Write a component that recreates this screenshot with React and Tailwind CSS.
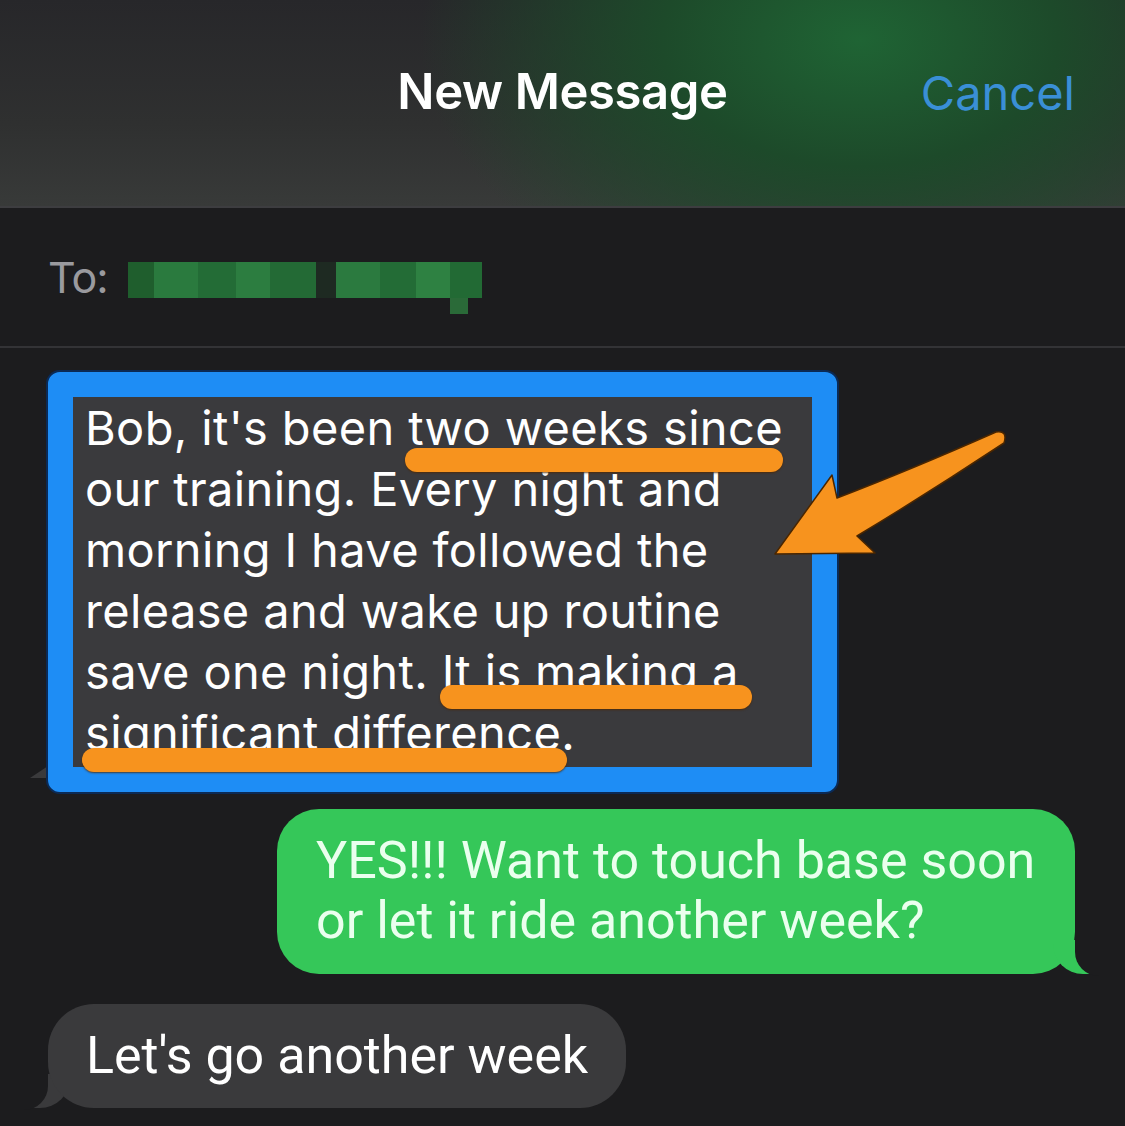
import React from "react";

const font = { fontFamily: "Inter, 'Noto Sans', sans-serif" };
const narrow = { fontFamily: "Roboto, 'Liberation Sans', sans-serif" };

const Underline = ({ className }) => (
  <div className={`absolute h-[24px] rounded-full bg-[#f7931e] shadow-[0_1px_2px_rgba(80,40,0,0.8)] ${className}`} />
);

const Arrow = () => (
  <svg className="absolute left-[760px] top-[420px]" width="260" height="150" viewBox="0 0 260 150">
    <path
      d="M15 134 L72 55 L77 78 Q150 50 236 12 Q248 10 244 23 Q170 72 97 116 L115 133 Z"
      fill="#f7931e"
      stroke="#4a2600"
      strokeWidth="1.5"
      strokeLinejoin="round"
    />
  </svg>
);

export default function App() {
  return (
    <div className="relative w-[1125px] h-[1126px] overflow-hidden bg-[#1c1c1e]" style={font}>
      {/* header */}
      <div className="relative h-[208px] border-b-2 border-[#3d3d40] bg-[radial-gradient(ellipse_440px_280px_at_860px_40px,#1f6434_0%,#1d4a2a_45%,rgba(40,44,42,0)_100%),linear-gradient(180deg,#27272a_0%,#2f3030_60%,#383a39_100%)]">
        <div className="flex h-[184px] items-center justify-center">
          <span className="text-[49px] font-semibold text-white tracking-[-0.4px]">New Message</span>
        </div>
        <span className="absolute right-[50px] top-[58px] text-[47px] text-[#3a8fd6]">Cancel</span>
      </div>

      {/* to row */}
      <div className="flex h-[140px] items-center border-b-2 border-[#333336] pl-[48px]">
        <span className="text-[43px] text-[#9a9a9e] tracking-[-1px]">To:</span>
        <div className="ml-[20px] mt-[22px] flex flex-col">
          <div className="flex h-[36px]">
            <div className="w-[26px] bg-[#1f5e2d]" />
            <div className="w-[44px] bg-[#2a7a3e]" />
            <div className="w-[38px] bg-[#236c36]" />
            <div className="w-[34px] bg-[#2c7d40]" />
            <div className="w-[46px] bg-[#236a35]" />
            <div className="w-[20px] bg-[#1e2a22]" />
            <div className="w-[44px] bg-[#2b7a3f]" />
            <div className="w-[36px] bg-[#236c36]" />
            <div className="w-[34px] bg-[#2e8142]" />
            <div className="w-[32px] bg-[#226a34]" />
          </div>
          <div className="flex h-[16px]">
            <div className="w-[322px]" />
            <div className="w-[18px] bg-[#2a6a38]" />
          </div>
        </div>
      </div>

      {/* messages */}
      <div className="flex flex-col px-[48px] pt-[24px]">
        <div className="relative w-[789px]">
          <div className="absolute -left-[18px] bottom-[14px] h-0 w-0 border-b-[16px] border-l-[24px] border-b-[#3a3a3c] border-l-transparent" />
          <div className="relative h-[420px] rounded-[12px] border-[25px] border-[#1e8df5] bg-[#3a3a3d] pl-[12px] pt-[0px] shadow-[0_0_0_2px_#0b2a55]">
            <p className="whitespace-nowrap text-[47px] leading-[61px] text-white tracking-[0.35px]">
              Bob, it's been two weeks since
              <br />
              our training. Every night and
              <br />
              morning I have followed the
              <br />
              release and wake up routine
              <br />
              save one night. It is making a
              <br />
              significant difference.
            </p>
          </div>
          <Underline className="left-[357px] top-[76px] w-[378px]" />
          <Underline className="left-[392px] top-[313px] w-[312px]" />
          <Underline className="left-[34px] top-[376px] w-[485px]" />
        </div>

        <div className="relative mt-[17px] ml-auto mr-[2px] w-[798px]" style={narrow}>
          <div className="rounded-[42px] bg-[#35c759] pl-[39px] pr-[20px] pt-[22px] pb-[23px]">
            <p className="whitespace-nowrap text-[52px] leading-[60px] text-[#eaffee] tracking-[0px]">
              YES!!! Want to touch base soon
              <br />
              or let it ride another week?
            </p>
          </div>
          <div className="absolute -right-[18px] bottom-0 h-[34px] w-[40px] rounded-bl-[30px] bg-[#35c759]" />
          <div className="absolute -right-[30px] -bottom-[2px] h-[38px] w-[30px] rounded-bl-[24px] bg-[#1c1c1e]" />
        </div>

        <div className="relative mt-[30px] self-start" style={narrow}>
          <div className="absolute -left-[18px] bottom-0 h-[34px] w-[40px] rounded-br-[30px] bg-[#3a3a3c]" />
          <div className="absolute -left-[30px] -bottom-[2px] h-[38px] w-[30px] rounded-br-[24px] bg-[#1c1c1e]" />
          <div className="relative rounded-[46px] bg-[#3a3a3c] px-[38px] py-[22px]">
            <p className="whitespace-nowrap text-[52px] leading-[60px] text-white tracking-[0px]">
              Let's go another week
            </p>
          </div>
        </div>
      </div>

      <Arrow />
    </div>
  );
}
